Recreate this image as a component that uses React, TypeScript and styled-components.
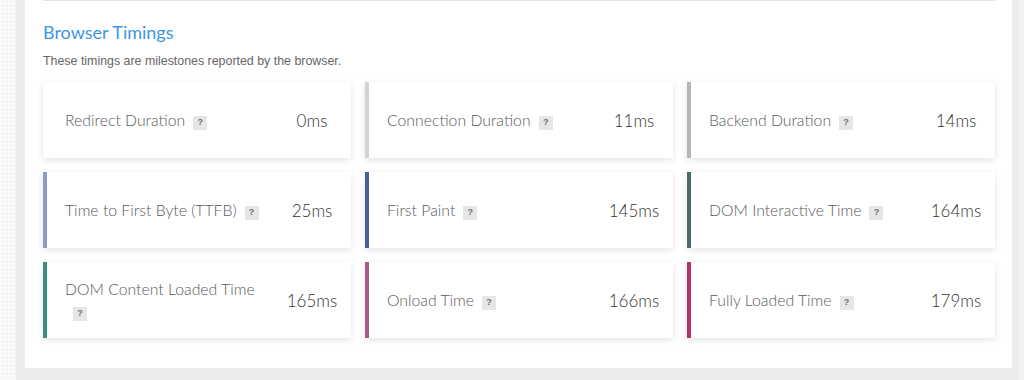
import React from "react";
import styled, { createGlobalStyle } from "styled-components";

const Global = createGlobalStyle`
  html, body { margin: 0; padding: 0; }
  body {
    background: #f3f3f3;
    font-family: "Liberation Sans", Arial, sans-serif;
    width: 1024px;
    height: 380px;
    overflow: hidden;
  }
`;

const Page = styled.div`
  display: flex;
  align-items: flex-start;
  height: 380px;
`;

const LeftStrip = styled.div`
  width: 16px;
  align-self: stretch;
  background-color: #f6f6f6;
  background-image:
    linear-gradient(90deg, rgba(255,255,255,0.7) 1px, transparent 1px),
    linear-gradient(0deg, rgba(255,255,255,0.7) 1px, transparent 1px);
  background-size: 4px 4px;
`;

const Frame = styled.div`
  width: 987px;
  background: #ececec;
  padding: 0 7px 12px 9px;
`;

const Panel = styled.section`
  background: #ffffff;
  padding: 0 17px 30px 18px;
`;

const Divider = styled.div`
  border-top: 1px solid #e3e3e3;
`;

const Title = styled.h2`
  margin: 19px 0 0;
  font-family: Lato, "Liberation Sans", sans-serif;
  font-weight: 400;
  font-size: 18px;
  line-height: 24px;
  color: #3b97e3;
`;

const Subtitle = styled.p`
  margin: 9px 0 0;
  font-size: 12.4px;
  line-height: 16px;
  color: #666666;
`;

const Grid = styled.div`
  margin-top: 13px;
  display: grid;
  grid-template-columns: repeat(3, 1fr);
  column-gap: 14px;
  row-gap: 14px;
`;

const Card = styled.div<{ $accent: string }>`
  display: flex;
  align-items: center;
  height: 76px;
  box-sizing: border-box;
  background: #ffffff;
  border-left: 4px solid ${(p) => p.$accent};
  box-shadow: 0 2px 7px rgba(0, 0, 0, 0.11);
  font-family: Lato, "Liberation Sans", sans-serif;
`;

const Label = styled.div`
  flex: 1;
  padding-left: 18px;
  max-width: 204px;
  font-size: 15.8px;
  font-weight: 300;
  line-height: 22px;
  color: #5a5a5a;
`;

const Help = styled.span`
  display: inline-flex;
  align-items: center;
  justify-content: center;
  width: 14px;
  height: 14px;
  margin-left: 8px;
  vertical-align: 1px;
  background: #e6e6e6;
  color: #6f6f6f;
  font-family: "Liberation Sans", Arial, sans-serif;
  font-size: 9px;
  font-weight: 700;
  line-height: 1;
`;

const Value = styled.div`
  margin-left: auto;
  width: 78px;
  flex: none;
  text-align: center;
  font-size: 17px;
  font-weight: 300;
  color: #333333;
`;

type Timing = { label: string; value: string; accent: string };

const timings: Timing[] = [
  { label: "Redirect Duration", value: "0ms", accent: "#ffffff" },
  { label: "Connection Duration", value: "11ms", accent: "#d2d2d2" },
  { label: "Backend Duration", value: "14ms", accent: "#bab5b5" },
  { label: "Time to First Byte (TTFB)", value: "25ms", accent: "#8e9bcb" },
  { label: "First Paint", value: "145ms", accent: "#4a5f95" },
  { label: "DOM Interactive Time", value: "164ms", accent: "#4c6b6c" },
  { label: "DOM Content Loaded Time", value: "165ms", accent: "#3b8b85" },
  { label: "Onload Time", value: "166ms", accent: "#a65b8b" },
  { label: "Fully Loaded Time", value: "179ms", accent: "#b4316a" },
];

export default function App() {
  return (
    <>
      <Global />
      <Page>
        <LeftStrip />
        <Frame>
          <Panel>
            <Divider />
            <Title>Browser Timings</Title>
            <Subtitle>These timings are milestones reported by the browser.</Subtitle>
            <Grid>
              {timings.map((t) => (
                <Card key={t.label} $accent={t.accent}>
                  <Label>
                    {t.label}
                    <Help>?</Help>
                  </Label>
                  <Value>{t.value}</Value>
                </Card>
              ))}
            </Grid>
          </Panel>
        </Frame>
      </Page>
    </>
  );
}
